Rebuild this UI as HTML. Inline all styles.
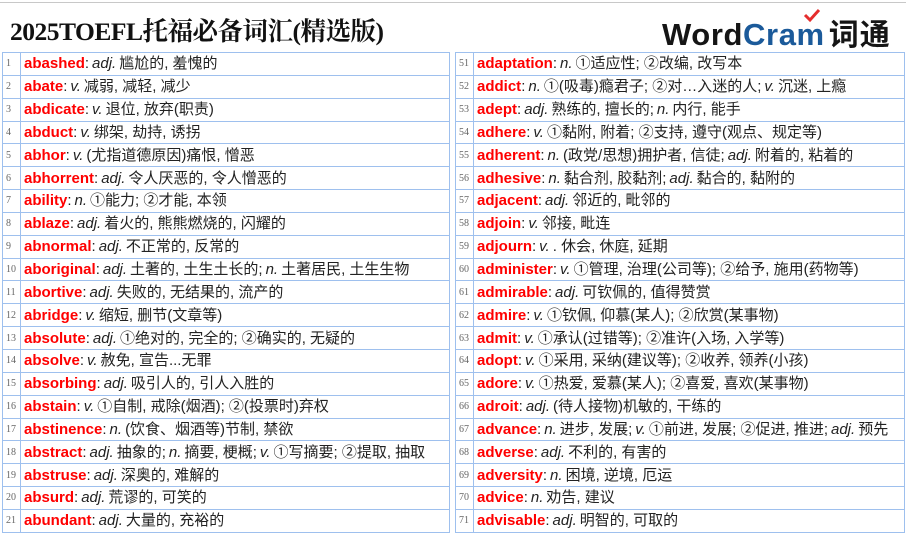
<!DOCTYPE html>
<html><head><meta charset="utf-8"><style>
*{margin:0;padding:0;box-sizing:border-box}
body{width:906px;height:531px;overflow:hidden;background:#fff;position:relative;font-family:"Liberation Sans","Noto Sans CJK SC",sans-serif}
.topline{position:absolute;left:0;top:2px;width:906px;height:1px;background:#c8c8c8}
h1{position:absolute;left:10px;top:12px;font-family:"Liberation Serif","Noto Serif CJK SC",serif;font-size:25.5px;font-weight:bold;color:#111;letter-spacing:-0.5px;white-space:nowrap}
.logo{position:absolute;left:662px;top:10px;font-size:31px;font-weight:bold;white-space:nowrap;letter-spacing:0.6px}
.logo .w{color:#151515}.logo .c{color:#1b5a9a}.logo .z{color:#151515;font-family:"Noto Sans CJK SC",sans-serif;font-size:30px;margin-left:4px;letter-spacing:1px}
.tbl{position:absolute;top:52px;border-left:1px solid #9ec0ee;border-right:1px solid #9ec0ee;border-top:1px solid #9ec0ee}
.r{height:22.85px;border-bottom:1px solid #9ec0ee;display:flex;align-items:stretch;font-size:15px;color:#222;white-space:nowrap;overflow:hidden}
.n{width:18px;flex:none;border-right:1px solid #9ec0ee;font-family:"Liberation Serif",serif;font-size:10px;color:#666;padding:0 0 0 3px;display:flex;align-items:center}
.t{padding:0 0 0 3px;display:flex;align-items:center;line-height:17px}
.t b{color:#f00;margin-right:0}
i{font-style:italic;margin:0 3px}
</style></head><body>
<div class="topline"></div>
<h1>2025TOEFL托福必备词汇(精选版)</h1>
<div class="logo"><span class="w">Word</span><span class="c">Cram</span><svg width="18" height="14" style="position:absolute;left:141px;top:-1px" viewBox="0 0 18 14"><path d="M2 6 L7 11 L16 1" stroke="#e52d2d" stroke-width="3" fill="none"/></svg><span class="z">词通</span></div>

<div class="tbl" style="left:2px;width:448px">
<div class="r"><div class="n">1</div><div class="t"><b>abashed</b>:<i>adj.</i>尴尬的, 羞愧的</div></div>
<div class="r"><div class="n">2</div><div class="t"><b>abate</b>:<i>v.</i>减弱, 减轻, 减少</div></div>
<div class="r"><div class="n">3</div><div class="t"><b>abdicate</b>:<i>v.</i>退位, 放弃(职责)</div></div>
<div class="r"><div class="n">4</div><div class="t"><b>abduct</b>:<i>v.</i>绑架, 劫持, 诱拐</div></div>
<div class="r"><div class="n">5</div><div class="t"><b>abhor</b>:<i>v.</i>(尤指道德原因)痛恨, 憎恶</div></div>
<div class="r"><div class="n">6</div><div class="t"><b>abhorrent</b>:<i>adj.</i>令人厌恶的, 令人憎恶的</div></div>
<div class="r"><div class="n">7</div><div class="t"><b>ability</b>:<i>n.</i>①能力; ②才能, 本领</div></div>
<div class="r"><div class="n">8</div><div class="t"><b>ablaze</b>:<i>adj.</i>着火的, 熊熊燃烧的, 闪耀的</div></div>
<div class="r"><div class="n">9</div><div class="t"><b>abnormal</b>:<i>adj.</i>不正常的, 反常的</div></div>
<div class="r"><div class="n">10</div><div class="t"><b>aboriginal</b>:<i>adj.</i>土著的, 土生土长的;<i>n.</i>土著居民, 土生生物</div></div>
<div class="r"><div class="n">11</div><div class="t"><b>abortive</b>:<i>adj.</i>失败的, 无结果的, 流产的</div></div>
<div class="r"><div class="n">12</div><div class="t"><b>abridge</b>:<i>v.</i>缩短, 删节(文章等)</div></div>
<div class="r"><div class="n">13</div><div class="t"><b>absolute</b>:<i>adj.</i>①绝对的, 完全的; ②确实的, 无疑的</div></div>
<div class="r"><div class="n">14</div><div class="t"><b>absolve</b>:<i>v.</i>赦免, 宣告...无罪</div></div>
<div class="r"><div class="n">15</div><div class="t"><b>absorbing</b>:<i>adj.</i>吸引人的, 引人入胜的</div></div>
<div class="r"><div class="n">16</div><div class="t"><b>abstain</b>:<i>v.</i>①自制, 戒除(烟酒); ②(投票时)弃权</div></div>
<div class="r"><div class="n">17</div><div class="t"><b>abstinence</b>:<i>n.</i>(饮食、烟酒等)节制, 禁欲</div></div>
<div class="r"><div class="n">18</div><div class="t"><b>abstract</b>:<i>adj.</i>抽象的;<i>n.</i>摘要, 梗概;<i>v.</i>①写摘要; ②提取, 抽取</div></div>
<div class="r"><div class="n">19</div><div class="t"><b>abstruse</b>:<i>adj.</i>深奥的, 难解的</div></div>
<div class="r"><div class="n">20</div><div class="t"><b>absurd</b>:<i>adj.</i>荒谬的, 可笑的</div></div>
<div class="r"><div class="n">21</div><div class="t"><b>abundant</b>:<i>adj.</i>大量的, 充裕的</div></div>
</div>

<div class="tbl" style="left:455px;width:450px">
<div class="r"><div class="n">51</div><div class="t"><b>adaptation</b>:<i>n.</i>①适应性; ②改编, 改写本</div></div>
<div class="r"><div class="n">52</div><div class="t"><b>addict</b>:<i>n.</i>①(吸毒)瘾君子; ②对…入迷的人;<i>v.</i>沉迷, 上瘾</div></div>
<div class="r"><div class="n">53</div><div class="t"><b>adept</b>:<i>adj.</i>熟练的, 擅长的;<i>n.</i>内行, 能手</div></div>
<div class="r"><div class="n">54</div><div class="t"><b>adhere</b>:<i>v.</i>①黏附, 附着; ②支持, 遵守(观点、规定等)</div></div>
<div class="r"><div class="n">55</div><div class="t"><b>adherent</b>:<i>n.</i>(政党/思想)拥护者, 信徒;<i>adj.</i>附着的, 粘着的</div></div>
<div class="r"><div class="n">56</div><div class="t"><b>adhesive</b>:<i>n.</i>黏合剂, 胶黏剂;<i>adj.</i>黏合的, 黏附的</div></div>
<div class="r"><div class="n">57</div><div class="t"><b>adjacent</b>:<i>adj.</i>邻近的, 毗邻的</div></div>
<div class="r"><div class="n">58</div><div class="t"><b>adjoin</b>:<i>v.</i>邻接, 毗连</div></div>
<div class="r"><div class="n">59</div><div class="t"><b>adjourn</b>:<i>v.</i>. 休会, 休庭, 延期</div></div>
<div class="r"><div class="n">60</div><div class="t"><b>administer</b>:<i>v.</i>①管理, 治理(公司等); ②给予, 施用(药物等)</div></div>
<div class="r"><div class="n">61</div><div class="t"><b>admirable</b>:<i>adj.</i>可钦佩的, 值得赞赏</div></div>
<div class="r"><div class="n">62</div><div class="t"><b>admire</b>:<i>v.</i>①钦佩, 仰慕(某人); ②欣赏(某事物)</div></div>
<div class="r"><div class="n">63</div><div class="t"><b>admit</b>:<i>v.</i>①承认(过错等); ②准许(入场, 入学等)</div></div>
<div class="r"><div class="n">64</div><div class="t"><b>adopt</b>:<i>v.</i>①采用, 采纳(建议等); ②收养, 领养(小孩)</div></div>
<div class="r"><div class="n">65</div><div class="t"><b>adore</b>:<i>v.</i>①热爱, 爱慕(某人); ②喜爱, 喜欢(某事物)</div></div>
<div class="r"><div class="n">66</div><div class="t"><b>adroit</b>:<i>adj.</i>(待人接物)机敏的, 干练的</div></div>
<div class="r"><div class="n">67</div><div class="t"><b>advance</b>:<i>n.</i>进步, 发展;<i>v.</i>①前进, 发展; ②促进, 推进;<i>adj.</i>预先</div></div>
<div class="r"><div class="n">68</div><div class="t"><b>adverse</b>:<i>adj.</i>不利的, 有害的</div></div>
<div class="r"><div class="n">69</div><div class="t"><b>adversity</b>:<i>n.</i>困境, 逆境, 厄运</div></div>
<div class="r"><div class="n">70</div><div class="t"><b>advice</b>:<i>n.</i>劝告, 建议</div></div>
<div class="r"><div class="n">71</div><div class="t"><b>advisable</b>:<i>adj.</i>明智的, 可取的</div></div>
</div>
</body></html>
